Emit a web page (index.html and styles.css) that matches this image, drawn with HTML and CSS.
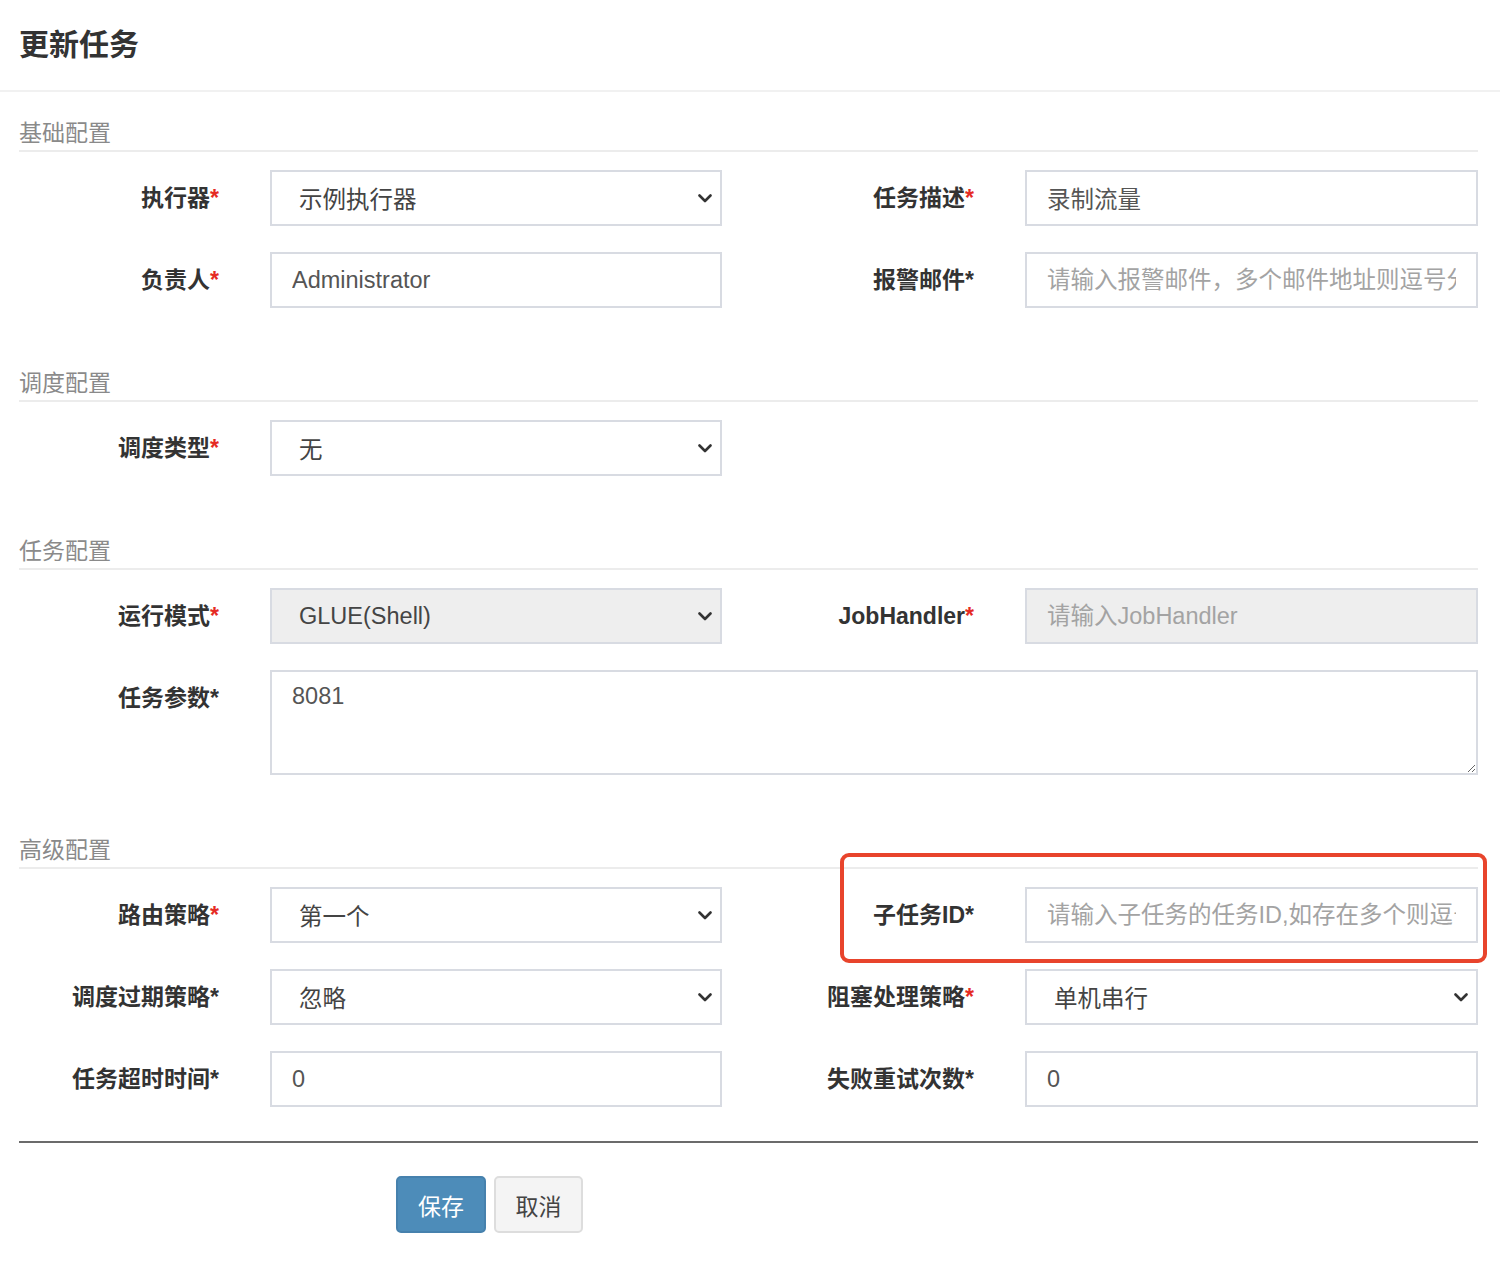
FILE: index.html
```html
<!DOCTYPE html>
<html lang="zh-CN">
<head>
<meta charset="utf-8">
<title>更新任务</title>
<link rel="stylesheet" href="styles.css">
</head>
<body>
<div class="modal">
  <div class="modal-header">
    <h4 class="modal-title">更新任务</h4>
  </div>
  <form class="modal-body">
    <div class="legend first">基础配置</div>
    <div class="form-row">
      <label class="label">执行器<span class="req">*</span></label>
      <div class="select"><span class="select-text">示例执行器</span><svg class="chev" width="14" height="9" viewBox="0 0 14 9"><polyline points="1.5,1.5 7,7 12.5,1.5" fill="none" stroke="#333" stroke-width="2.6" stroke-linecap="round" stroke-linejoin="round"/></svg></div>
      <label class="label">任务描述<span class="req">*</span></label>
      <input class="input" type="text" value="录制流量">
    </div>
    <div class="form-row">
      <label class="label">负责人<span class="req">*</span></label>
      <input class="input" type="text" value="Administrator">
      <label class="label">报警邮件<span class="plain">*</span></label>
      <input class="input" type="text" placeholder="请输入报警邮件，多个邮件地址则逗号分隔">
    </div>

    <div class="legend">调度配置</div>
    <div class="form-row">
      <label class="label">调度类型<span class="req">*</span></label>
      <div class="select"><span class="select-text">无</span><svg class="chev" width="14" height="9" viewBox="0 0 14 9"><polyline points="1.5,1.5 7,7 12.5,1.5" fill="none" stroke="#333" stroke-width="2.6" stroke-linecap="round" stroke-linejoin="round"/></svg></div>
    </div>

    <div class="legend">任务配置</div>
    <div class="form-row">
      <label class="label">运行模式<span class="req">*</span></label>
      <div class="select disabled"><span class="select-text">GLUE(Shell)</span><svg class="chev" width="14" height="9" viewBox="0 0 14 9"><polyline points="1.5,1.5 7,7 12.5,1.5" fill="none" stroke="#333" stroke-width="2.6" stroke-linecap="round" stroke-linejoin="round"/></svg></div>
      <label class="label">JobHandler<span class="req">*</span></label>
      <input class="input disabled" type="text" placeholder="请输入JobHandler" readonly>
    </div>
    <div class="form-row tall">
      <label class="label">任务参数<span class="plain">*</span></label>
      <textarea class="textarea">8081</textarea>
    </div>

    <div class="legend">高级配置</div>
    <div class="form-row">
      <label class="label">路由策略<span class="req">*</span></label>
      <div class="select"><span class="select-text">第一个</span><svg class="chev" width="14" height="9" viewBox="0 0 14 9"><polyline points="1.5,1.5 7,7 12.5,1.5" fill="none" stroke="#333" stroke-width="2.6" stroke-linecap="round" stroke-linejoin="round"/></svg></div>
      <label class="label">子任务ID<span class="plain">*</span></label>
      <input class="input" type="text" placeholder="请输入子任务的任务ID,如存在多个则逗号分隔">
      <span class="annot"></span>
    </div>
    <div class="form-row">
      <label class="label">调度过期策略<span class="plain">*</span></label>
      <div class="select"><span class="select-text">忽略</span><svg class="chev" width="14" height="9" viewBox="0 0 14 9"><polyline points="1.5,1.5 7,7 12.5,1.5" fill="none" stroke="#333" stroke-width="2.6" stroke-linecap="round" stroke-linejoin="round"/></svg></div>
      <label class="label">阻塞处理策略<span class="req">*</span></label>
      <div class="select"><span class="select-text">单机串行</span><svg class="chev" width="14" height="9" viewBox="0 0 14 9"><polyline points="1.5,1.5 7,7 12.5,1.5" fill="none" stroke="#333" stroke-width="2.6" stroke-linecap="round" stroke-linejoin="round"/></svg></div>
    </div>
    <div class="form-row">
      <label class="label">任务超时时间<span class="plain">*</span></label>
      <input class="input" type="text" value="0">
      <label class="label">失败重试次数<span class="plain">*</span></label>
      <input class="input" type="text" value="0">
    </div>

    <hr class="divider">
    <div class="actions">
      <button type="button" class="btn btn-primary">保存</button>
      <button type="button" class="btn btn-default">取消</button>
    </div>
  </form>
</div>
</body>
</html>
```

FILE: styles.css
```css
* {
  box-sizing: border-box;
}

html, body {
  margin: 0;
  padding: 0;
  background: #ffffff;
}

body {
  font-family: "Liberation Sans", "Noto Sans CJK SC", sans-serif;
  color: #333333;
  font-size: 23px;
}

.modal {
  width: 1500px;
}

.modal-header {
  height: 92px;
  display: flex;
  align-items: center;
  padding: 0 19px;
  border-bottom: 2px solid #f1f1f1;
}

.modal-title {
  margin: 0;
  font-size: 30px;
  font-weight: 700;
  color: #333333;
  line-height: 34px;
}

.modal-body {
  margin: 0;
  padding: 0 22px 40px 19px;
}

.legend {
  margin-top: 58px;
  height: 36px;
  line-height: 34px;
  font-size: 23px;
  color: #8a8a8a;
  border-bottom: 2px solid #ececec;
}

.legend.first {
  margin-top: 24px;
}

.form-row {
  position: relative;
  display: grid;
  grid-template-columns: 200px 452px 201px 453px;
  column-gap: 51px;
  height: 56px;
  margin-top: 26px;
}

.legend + .form-row {
  margin-top: 18px;
}

.form-row.tall {
  height: 105px;
}

.label {
  align-self: start;
  height: 56px;
  line-height: 56px;
  text-align: right;
  font-weight: 700;
  font-size: 23px;
  color: #333333;
  white-space: nowrap;
}

.req {
  color: #e52b24;
}

.plain {
  color: #333333;
}

.input,
.select,
.textarea {
  height: 56px;
  border: 2px solid #d8dbe2;
  background: #ffffff;
  font-family: "Liberation Sans", "Noto Sans CJK SC", sans-serif;
  font-size: 23.5px;
  color: #555555;
  outline: none;
  border-radius: 0;
}

.input {
  width: 100%;
  padding: 0 20px;
}

.input::placeholder {
  color: #a3a3a3;
}

.input.disabled,
.select.disabled {
  background: #eeeeee;
}

.select {
  display: flex;
  align-items: center;
  justify-content: space-between;
  padding: 0 8px 0 27px;
  color: #444444;
}

.select-text {
  white-space: nowrap;
}

.chev {
  display: block;
  flex: none;
}

.textarea {
  grid-column: 2 / 5;
  height: 105px;
  padding: 10px 20px;
  line-height: 28px;
  resize: vertical;
}

.annot {
  position: absolute;
  left: 821px;
  top: -34px;
  width: 647px;
  height: 110px;
  border: 4px solid #e8442c;
  border-radius: 9px;
  pointer-events: none;
}

.divider {
  margin: 34px 0 0;
  border: 0;
  border-top: 2px solid #6b6b6b;
  width: 1459px;
}

.actions {
  display: flex;
  gap: 8px;
  margin-top: 33px;
  padding-left: 377px;
}

.btn {
  height: 57px;
  padding: 0;
  font-family: "Liberation Sans", "Noto Sans CJK SC", sans-serif;
  font-size: 23px;
  border-radius: 5px;
  white-space: nowrap;
  cursor: pointer;
}

.btn-primary {
  width: 90px;
  background: #4d8cb9;
  border: 2px solid #4681ad;
  color: #ffffff;
}

.btn-default {
  width: 89px;
  background: #f4f4f4;
  border: 2px solid #dddddd;
  color: #444444;
}
```
